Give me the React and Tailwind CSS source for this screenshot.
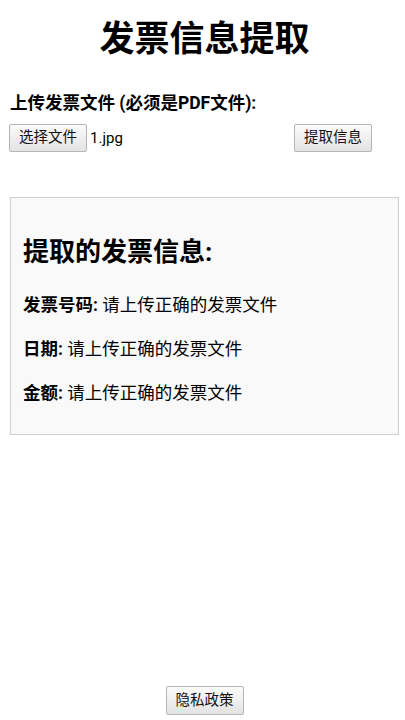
export default function App() {
  const rows = [
    { label: '发票号码', value: '请上传正确的发票文件' },
    { label: '日期', value: '请上传正确的发票文件' },
    { label: '金额', value: '请上传正确的发票文件' },
  ];

  const btn =
    'h-[28px] px-[9px] text-[14.5px] leading-[26px] text-[#111] border border-[#b5b5b5] rounded-[2px] bg-gradient-to-b from-[#fbfbfb] to-[#e3e3e3]';

  return (
    <div
      className="min-h-[720px] flex flex-col pl-[10px] pr-[6px] bg-white text-black"
      style={{ fontFamily: 'Roboto, "Noto Sans CJK SC", sans-serif' }}
    >
      {/* Title */}
      <h1 className="mt-[20px] text-center text-[35px] leading-[40px] font-bold">
        发票信息提取
      </h1>

      {/* Upload */}
      <label className="mt-[31px] text-[17.5px] leading-[24px] font-bold">
        上传发票文件 (必须是PDF文件):
      </label>
      <div className="mt-[9px] flex items-center">
        <button className={`${btn} -ml-[1px]`}>选择文件</button>
        <span className="ml-[3px] text-[15px]">1.jpg</span>
        <button className={`${btn} ml-auto mr-[27px]`}>提取信息</button>
      </div>

      {/* Result */}
      <div className="mt-[45px] border border-[#cfcfcf] bg-[#f9f9f9] px-[12px] pt-[38px] pb-[28px]">
        <h2 className="text-[26px] leading-[32px] font-bold">提取的发票信息:</h2>
        <div className="mt-[24px] flex flex-col gap-[18px]">
          {rows.map((r) => (
            <p key={r.label} className="text-[17.5px] leading-[26px]">
              <b className="font-bold">{r.label}:</b> {r.value}
            </p>
          ))}
        </div>
      </div>

      {/* Footer */}
      <div className="mt-auto mb-[5px] flex justify-center">
        <button className={`${btn} h-[29px]`}>隐私政策</button>
      </div>
    </div>
  );
}
